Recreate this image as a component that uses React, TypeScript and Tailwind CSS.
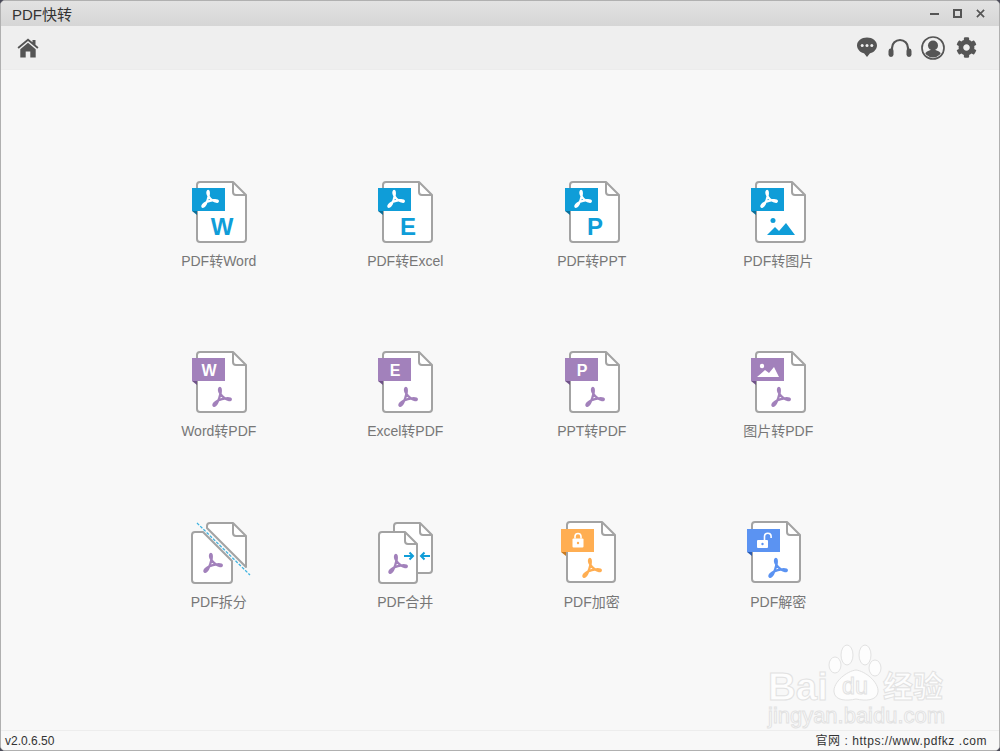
import { FaCog } from 'react-icons/fa';

const BLUE = '#0f9dd8';
const PURPLE = '#a281bb';
const ORANGE = '#ffae52';
const LOCKBLUE = '#5b93f2';
const EDGE = '#a3a3a3';

// acrobat symbol, drawn in a 20x20 box
function Acro({ x, y, size = 20, color }: { x: number; y: number; size?: number; color: string }) {
  const s = size / 20;
  return (
    <path
      transform={`translate(${x} ${y}) scale(${s})`}
      d="M7.5 1.2C5.8 3.5 9 9 13 11.5C15.5 13 19.2 14 18.8 12.2C18.4 10.5 11 11 6 13.5C3 15 .4 17.8 1.8 18.8C3.5 19.6 7 14 8.6 6C9.1 3 8.6 .2 7.5 1.2Z"
      fill="none"
      stroke={color}
      strokeWidth={2.3}
      strokeLinejoin="round"
    />
  );
}

function Doc({ x = 10, w = 49, y = 2, h = 60, foldAt = 13 }: { x?: number; w?: number; y?: number; h?: number; foldAt?: number }) {
  const r = x + w;
  const b = y + h;
  return (
    <g stroke={EDGE} strokeWidth="2" fill="#fff" strokeLinejoin="round">
      <path d={`M${x + 3} ${y}H${r - foldAt}L${r} ${y + foldAt}V${b - 3}a3 3 0 0 1-3 3H${x + 3}a3 3 0 0 1-3-3V${y + 3}a3 3 0 0 1 3-3Z`} />
      <path d={`M${r - foldAt} ${y}V${y + foldAt - 3}a3 3 0 0 0 3 3H${r}`} fill="none" />
    </g>
  );
}

function Banner({ x = 5, y = 8, color, shade }: { x?: number; y?: number; color: string; shade: string }) {
  return (
    <g>
      <path d={`M${x} ${y + 23}h5v4Z`} fill={shade} />
      <rect x={x} y={y} width="33" height="23" fill={color} />
    </g>
  );
}

function Letter({ x, y, size, color, children }: { x: number; y: number; size: number; color: string; children: string }) {
  return (
    <text x={x} y={y} fontSize={size} fontWeight="700" textAnchor="middle" fill={color} fontFamily="'Liberation Sans', sans-serif">
      {children}
    </text>
  );
}

function Mountains({ color }: { color: string }) {
  return (
    <g fill={color}>
      <circle cx="27" cy="40.5" r="2.5" />
      <path d="M21 55L29 47L33 51L40 43L49 55Z" />
    </g>
  );
}

function ToPdfLetter({ letter }: { letter: string }) {
  return (
    <svg width="64" height="64" viewBox="0 0 64 64">
      <Doc />
      <Banner color={BLUE} shade="#0b6f99" />
      <Acro x={14} y={10} size={18} color="#fff" />
      {letter === 'img' ? <Mountains color={BLUE} /> : <Letter x={35} y={55} size={24} color={BLUE}>{letter}</Letter>}
    </svg>
  );
}

function FromPdfLetter({ letter }: { letter: string }) {
  return (
    <svg width="64" height="64" viewBox="0 0 64 64">
      <Doc />
      <Banner color={PURPLE} shade="#6f5288" />
      {letter === 'img' ? (
        <g fill="#fff">
          <circle cx="16" cy="16" r="2.2" />
          <path d="M11 27L19 20L23 23L28 17L33 27Z" />
        </g>
      ) : (
        <Letter x={22} y={26} size={16} color="#fff">{letter}</Letter>
      )}
      <Acro x={25} y={37} color={PURPLE} />
    </svg>
  );
}

function SplitIcon() {
  return (
    <svg width="64" height="64" viewBox="0 0 64 64">
      <path d="M8 12H16L45 41V60a3 3 0 0 1-3 3H8a3 3 0 0 1-3-3V15a3 3 0 0 1 3-3Z" fill="#fff" stroke={EDGE} strokeWidth="2" strokeLinejoin="round" />
      <path d="M23 3H46L59 16V47L20 8V6a3 3 0 0 1 3-3Z" fill="#fff" stroke={EDGE} strokeWidth="2" strokeLinejoin="round" />
      <path d="M46 3V13a3 3 0 0 0 3 3H59" fill="none" stroke={EDGE} strokeWidth="2" />
      <path d="M10 3L63 55" stroke="#3fb3e0" strokeWidth="1.3" strokeDasharray="3 1.5" />
      <Acro x={16} y={33} color={PURPLE} />
    </svg>
  );
}

function MergeIcon() {
  return (
    <svg width="64" height="64" viewBox="0 0 64 64">
      <Doc x={21} w={38} y={3} h={50} foldAt={12} />
      <Doc x={6} w={38} y={12} h={51} foldAt={12} />
      <Acro x={15} y={34} color={PURPLE} />
      <g fill="none" stroke={BLUE} strokeWidth="2">
        <path d="M31 36H40M36.5 32.5L40 36L36.5 39.5" />
        <path d="M57 36H48M51.5 32.5L48 36L51.5 39.5" />
      </g>
    </svg>
  );
}

function LockIcon({ open }: { open?: boolean }) {
  const color = open ? LOCKBLUE : ORANGE;
  return (
    <svg width="64" height="64" viewBox="0 0 64 64">
      <Doc x={open ? 6 : 7} w={48} />
      <Banner x={1} y={9} color={color} shade={open ? '#2a5bb0' : '#c97a20'} />
      {open ? (
        <g>
          <rect x="11" y="20" width="11" height="8" rx="1" fill="#fff" />
          <path d="M18.5 20V16.5a3.3 3.3 0 0 1 6.6 0V18" fill="none" stroke="#fff" strokeWidth="1.6" />
          <circle cx="16.5" cy="24" r="1.2" fill={color} />
        </g>
      ) : (
        <g>
          <rect x="12.5" y="18.5" width="11" height="9" rx="1" fill="#fff" />
          <path d="M15 18.5V16.500a3 3 0 0 1 6 0V18.500" fill="none" stroke="#fff" strokeWidth="1.6" />
          <circle cx="18" cy="23" r="1.2" fill={color} />
        </g>
      )}
      <Acro x={22} y={38} color={color} />
    </svg>
  );
}

const items = [
  { label: 'PDF转Word', icon: <ToPdfLetter letter="W" /> },
  { label: 'PDF转Excel', icon: <ToPdfLetter letter="E" /> },
  { label: 'PDF转PPT', icon: <ToPdfLetter letter="P" /> },
  { label: 'PDF转图片', icon: <ToPdfLetter letter="img" /> },
  { label: 'Word转PDF', icon: <FromPdfLetter letter="W" /> },
  { label: 'Excel转PDF', icon: <FromPdfLetter letter="E" /> },
  { label: 'PPT转PDF', icon: <FromPdfLetter letter="P" /> },
  { label: '图片转PDF', icon: <FromPdfLetter letter="img" /> },
  { label: 'PDF拆分', icon: <SplitIcon /> },
  { label: 'PDF合并', icon: <MergeIcon /> },
  { label: 'PDF加密', icon: <LockIcon /> },
  { label: 'PDF解密', icon: <LockIcon open /> },
];

function Home() {
  return (
    <svg width="22" height="20" viewBox="0 0 22 20" fill="#555">
      <path d="M11 0.500L15.500 4.300V2H18.500V6.800L21.500 9.300L20.300 10.800L11 3L1.700 10.800L0.500 9.300Z" />
      <path d="M11 4.800L18.700 11.200V19.500H13.300V13.500H8.700V19.500H3.300V11.200Z" />
    </svg>
  );
}

function Comment() {
  return (
    <svg width="20" height="21" viewBox="0 0 20 21">
      <path d="M10 0.500C15.500 0.500 20 3.800 20 8.500C20 13 15.500 16 13 16.300L10 20L7 16.300C4.500 16 0 13 0 8.500C0 3.800 4.500 0.500 10 0.500Z" fill="#555" />
      <circle cx="5.200" cy="8.500" r="1.500" fill="#efefef" />
      <circle cx="10" cy="8.500" r="1.500" fill="#efefef" />
      <circle cx="14.800" cy="8.500" r="1.500" fill="#efefef" />
    </svg>
  );
}

function Headset() {
  return (
    <svg width="24" height="20" viewBox="0 0 24 20" fill="#555">
      <path d="M4 13V10a8 8 0 0 1 16 0v3" fill="none" stroke="#555" strokeWidth="2.2" />
      <rect x="0.500" y="10.500" width="5" height="8.500" rx="2.400" />
      <rect x="18.500" y="10.500" width="5" height="8.500" rx="2.400" />
    </svg>
  );
}

function UserRing() {
  return (
    <svg width="24" height="24" viewBox="0 0 24 24">
      <defs>
        <clipPath id="ring"><circle cx="12" cy="12" r="9.400" /></clipPath>
      </defs>
      <circle cx="12" cy="12" r="11" fill="#efefef" stroke="#555" strokeWidth="1.700" />
      <g fill="#555" clipPath="url(#ring)">
        <circle cx="12" cy="9.500" r="5" />
        <path d="M2 24C2 17.500 6 15 9.500 14L14.500 14C18 15 22 17.500 22 24Z" />
      </g>
    </svg>
  );
}

function Watermark() {
  return (
    <svg className="absolute left-[760px] top-[640px]" width="200" height="92" viewBox="0 0 200 92">
      <g fill="#fdfdfd" stroke="#e2e2e2" strokeWidth="1">
        <text x="8" y="60" fontSize="39" fontWeight="700" fontFamily="'Liberation Sans', sans-serif" textLength="60" lengthAdjust="spacingAndGlyphs">Bai</text>
        <ellipse cx="75" cy="25" rx="6" ry="8" />
        <ellipse cx="87" cy="15" rx="6" ry="10" />
        <ellipse cx="105" cy="15" rx="6" ry="10" />
        <ellipse cx="115" cy="28" rx="6" ry="8" />
        <path d="M96 30C105 31 119 42 118 52C117 61 105 61 96 59C87 61 75 61 74 52C73 42 87 31 96 30Z" />
        <text x="82" y="54" fontSize="24" fontFamily="'Liberation Sans', sans-serif" textLength="26" lengthAdjust="spacingAndGlyphs">du</text>
        <text x="123" y="57" fontSize="30" fontWeight="700" fontFamily="'Noto Sans CJK SC', sans-serif">经验</text>
        <text x="8" y="83" fontSize="22" fontFamily="'Liberation Sans', sans-serif" textLength="177" lengthAdjust="spacingAndGlyphs">jingyan.baidu.com</text>
      </g>
    </svg>
  );
}

export default function App() {
  return (
    <div className="relative h-[751px] w-[1000px] overflow-hidden bg-[#4a4a58] font-['Liberation_Sans','Noto_Sans_CJK_SC',sans-serif]">
      <div className="flex h-full flex-col overflow-hidden rounded-[5px] border border-[#b0b0b0] bg-[#f8f8f8]">
        <div className="flex h-[25px] shrink-0 items-center justify-between bg-gradient-to-b from-[#e2e2e2] to-[#d6d6d6] pl-[11px] pr-[14px]">
          <span className="mt-[1px] text-[15px] leading-none text-[#333]">PDF快转</span>
          <div className="flex items-center gap-[14px]">
            <span className="mt-[1px] h-[2px] w-[9px] bg-[#555]" />
            <span className="h-[9px] w-[9px] border-2 border-[#555]" />
            <svg width="9" height="9" viewBox="0 0 10 10"><path d="M1 1L9 9M9 1L1 9" stroke="#555" strokeWidth="1.9" /></svg>
          </div>
        </div>
        <div className="flex h-[44px] shrink-0 items-center justify-between border-b border-[#ececec] bg-[#efefef] pl-[16px] pr-[22px]">
          <Home />
          <div className="flex items-center">
            <Comment />
            <span className="ml-[11px]"><Headset /></span>
            <span className="ml-[9px]"><UserRing /></span>
            <span className="ml-[11px]"><FaCog className="text-[#555]" size={21} /></span>
          </div>
        </div>
        <div className="grid flex-1 grid-cols-[repeat(4,186.5px)] content-start pl-[124.5px] pt-[110px]">
          {items.map((item, i) => (
            <div key={item.label} className="flex h-[170px] flex-col items-center">
              {item.icon}
              <span className={`${i >= 8 ? 'mt-[8px]' : 'mt-[7px]'} text-[14px] leading-5 text-[#777]`}>{item.label}</span>
            </div>
          ))}
        </div>
        <div className="flex h-[20px] shrink-0 items-center justify-between border-t border-[#ededed] bg-[#f8f8f8] pl-[4px] pr-[12px] text-[12px] text-[#333]">
          <span>v2.0.6.50</span>
          <span className="tracking-[0.55px]">官网 : https://www.pdfkz .com</span>
        </div>
      </div>
      <Watermark />
    </div>
  );
}
